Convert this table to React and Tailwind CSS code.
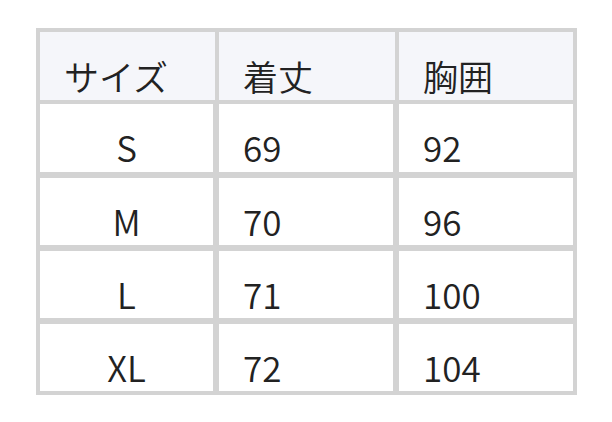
export default function App() {
  const rows = [
    ["S", "69", "92"],
    ["M", "70", "96"],
    ["L", "71", "100"],
    ["XL", "72", "104"],
  ];
  const heights = ["h-[68px]", "h-[67px]", "h-[67px]", "h-[67px]"];
  return (
    <div
      className="w-[612px] h-[422px] bg-white pt-[28px] pl-[36px] text-[#222] text-[35px] leading-none font-[350]"
      style={{ fontFamily: '"Noto Sans CJK JP", "Noto Sans", sans-serif' }}
    >
      <div className="w-[541px] bg-[#d3d3d3] p-[4px] flex flex-col gap-[6px]">
        <div className="grid grid-cols-[175px_176px_174px] gap-[4px] -mb-[2px]">
          <div className="h-[68px] bg-[#f5f6fa] pt-[26px] pl-[24px]">サイズ</div>
          <div className="h-[68px] bg-[#f5f6fa] pt-[26px] pl-[24px]">着丈</div>
          <div className="h-[68px] bg-[#f5f6fa] pt-[26px] pl-[24px]">胸囲</div>
        </div>
        {rows.map((r, i) => (
          <div key={r[0]} className="grid grid-cols-[173px_174px_174px] gap-[6px]">
            <div className={`${heights[i]} bg-white pt-[25px] text-center`}>{r[0]}</div>
            <div className={`${heights[i]} bg-white pt-[25px] pl-[24px]`}>{r[1]}</div>
            <div className={`${heights[i]} bg-white pt-[25px] pl-[24px]`}>{r[2]}</div>
          </div>
        ))}
      </div>
    </div>
  );
}
